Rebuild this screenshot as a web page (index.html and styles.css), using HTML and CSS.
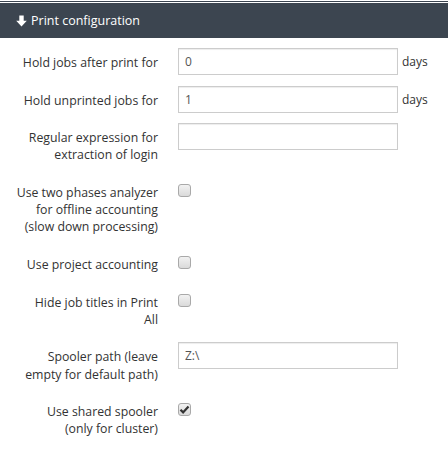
FILE: index.html
```html
<!DOCTYPE html>
<html>
<head>
<meta charset="utf-8">
<link rel="stylesheet" href="styles.css">
</head>
<body>
<div class="topline"></div>
<div class="header">
  <svg class="arrow" width="11" height="12" viewBox="0 0 11 12"><path d="M3.3 0.5h4.4v5.3h3.1l-5.3 5.7-5.3-5.7h3.1z" fill="#fff"/></svg>
  <span>Print configuration</span>
</div>
<form class="form">
  <div class="row">
    <label class="lbl">Hold jobs after print for</label>
    <div class="ctl"><input class="inp" type="text" value="0"><span class="unit">days</span></div>
  </div>
  <div class="row">
    <label class="lbl">Hold unprinted jobs for</label>
    <div class="ctl"><input class="inp" type="text" value="1"><span class="unit">days</span></div>
  </div>
  <div class="row">
    <label class="lbl">Regular expression for<br>extraction of login</label>
    <div class="ctl"><input class="inp" type="text" value=""></div>
  </div>
  <div class="row">
    <label class="lbl">Use two phases analyzer<br>for offline accounting<br>(slow down processing)</label>
    <div class="ctl"><span class="cb"></span></div>
  </div>
  <div class="row">
    <label class="lbl">Use project accounting</label>
    <div class="ctl"><span class="cb"></span></div>
  </div>
  <div class="row">
    <label class="lbl">Hide job titles in Print<br>All</label>
    <div class="ctl"><span class="cb"></span></div>
  </div>
  <div class="row">
    <label class="lbl">Spooler path (leave<br>empty for default path)</label>
    <div class="ctl"><input class="inp" type="text" value="Z:\"></div>
  </div>
  <div class="row">
    <label class="lbl">Use shared spooler<br>(only for cluster)</label>
    <div class="ctl"><span class="cb checked"><svg width="11" height="11" viewBox="0 0 11 11"><path d="M1.5 5.8l2.6 2.6 5.4-6" fill="none" stroke="#333" stroke-width="2.2"/></svg></span></div>
  </div>
</form>
</body>
</html>
```
FILE: styles.css
```css
html, body {
  margin: 0;
  padding: 0;
  background: #fff;
  font-family: "Open Sans", "Noto Sans", sans-serif;
  color: #333;
}
.topline {
  height: 1px;
  margin-top: 1px;
  background: #3b4450;
  margin-bottom: 1px;
}
.header {
  height: 35px;
  background: #3c4550;
  color: #fff;
  display: flex;
  align-items: center;
  padding-left: 16px;
  font-size: 12.5px;
}
.arrow {
  margin-right: 4px;
  margin-top: 1px;
}
.form {
  padding-top: 10px;
}
.row {
  display: flex;
  align-items: flex-start;
  margin-bottom: 10px;
}
.lbl {
  width: 148px;
  margin-left: 10px;
  margin-right: 20px;
  text-align: right;
  font-size: 12.3px;
  line-height: 17.14px;
  padding: 6px 0 4.5px;
  white-space: nowrap;
}
.ctl {
  display: flex;
  align-items: center;
}
.inp {
  box-sizing: border-box;
  width: 220px;
  height: 27px;
  margin: 0;
  border: 1px solid #ccc;
  box-shadow: inset 0 1px 1px rgba(0,0,0,.075);
  padding: 0 6px;
  font-family: inherit;
  font-size: 12px;
  color: #555;
  outline: none;
}
.unit {
  font-size: 12px;
  margin-left: 4px;
}
.cb {
  box-sizing: border-box;
  display: flex;
  align-items: center;
  justify-content: center;
  width: 13px;
  height: 13px;
  margin-top: 6px;
  border: 1px solid #a9a9a9;
  border-radius: 3px;
  background: linear-gradient(#f2f2f2, #dadada);
}
```
